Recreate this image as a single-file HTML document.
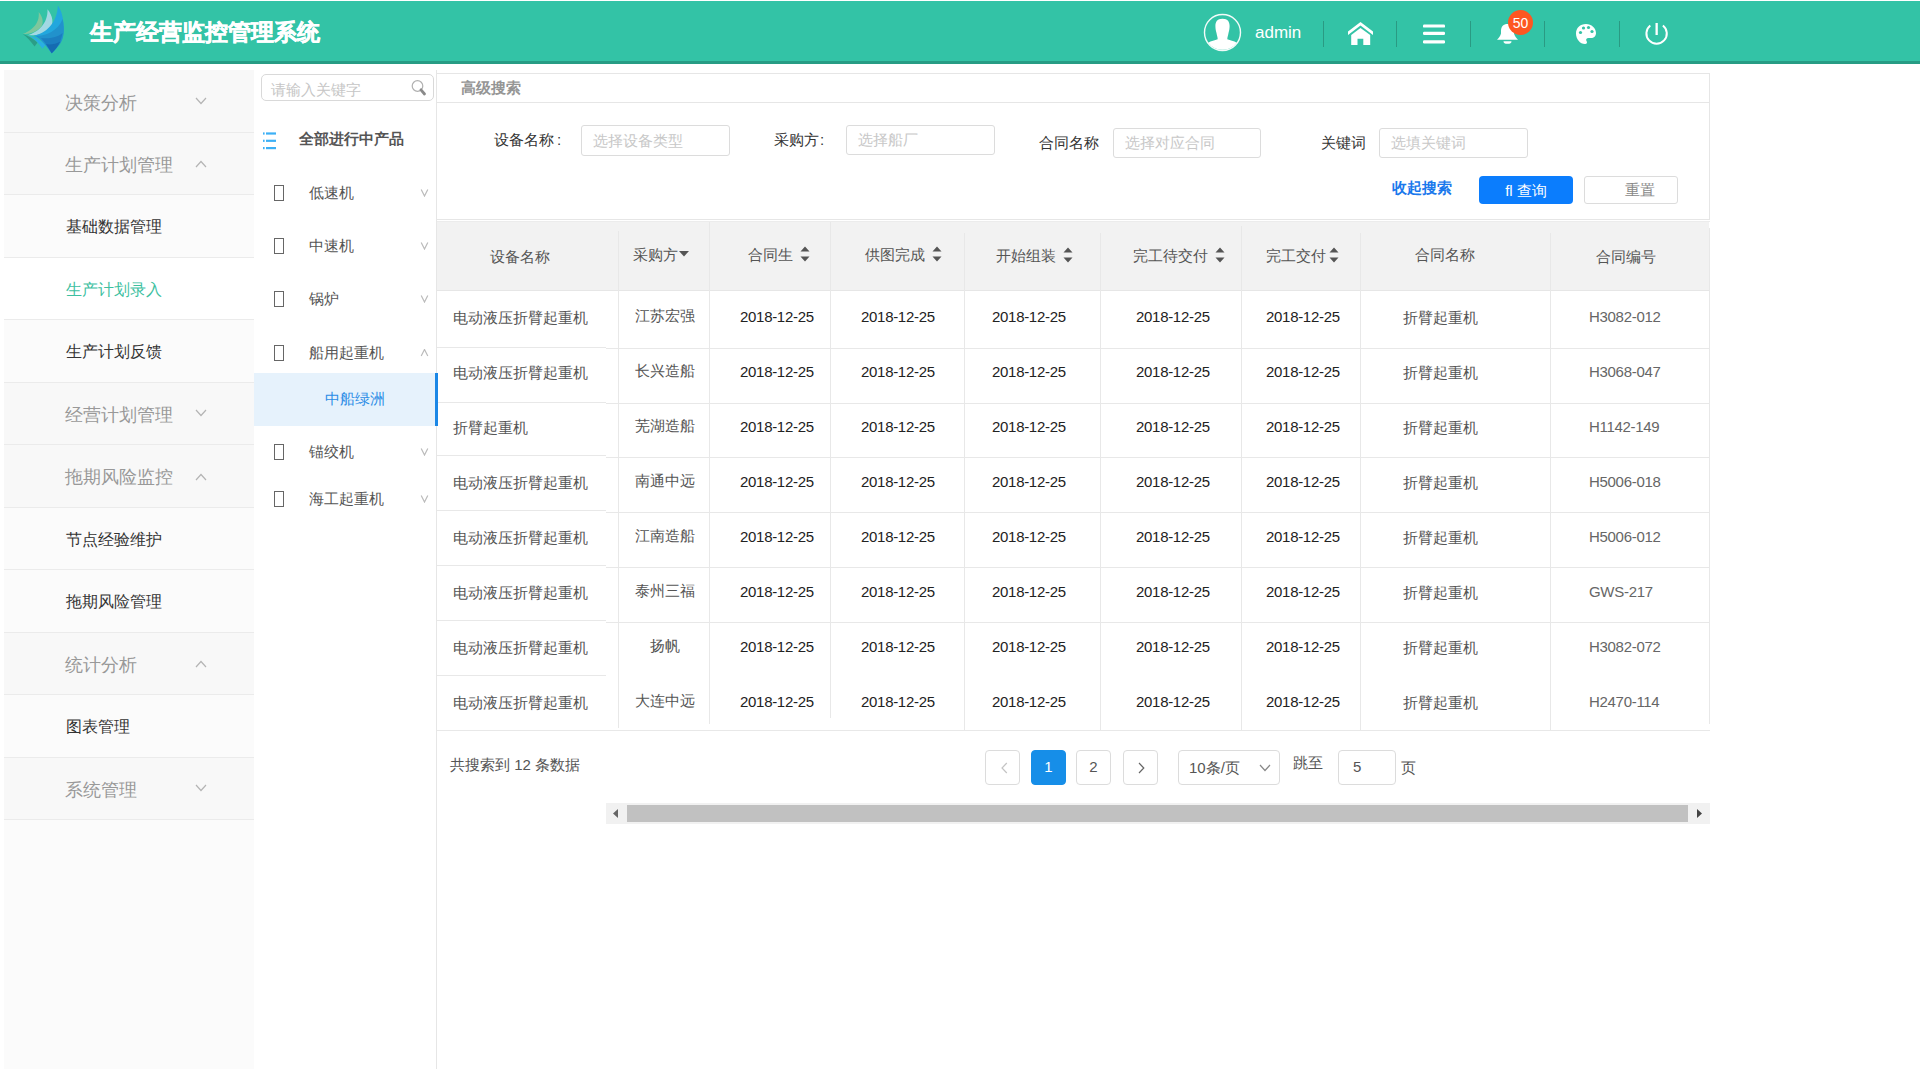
<!DOCTYPE html>
<html><head><meta charset="utf-8">
<style>
*{margin:0;padding:0;box-sizing:border-box}
html,body{width:1920px;height:1080px;overflow:hidden;background:#fff;font-family:"Liberation Sans",sans-serif;color:#333}
.abs{position:absolute}
#hdr{position:absolute;left:0;top:1px;width:1920px;height:60px;background:#33c3a6}
#hdrb{position:absolute;left:0;top:61px;width:1920px;height:3px;background:#279c84}
.title{position:absolute;left:90px;top:16px;font-size:23px;font-weight:bold;color:#fff;-webkit-text-stroke:0.5px #fff;line-height:32px;white-space:nowrap}
.sep{position:absolute;top:21px;width:1px;height:26px;background:#2a9a83}
#side{position:absolute;left:4px;top:70px;width:250px;height:999px;background:#fbfbfb}
.mi{position:absolute;left:4px;width:250px;border-bottom:1px solid #ebebeb;white-space:nowrap}
.mi.p{background:#f8f8f8;color:#999;font-size:18px}
.mi.c{background:#fbfbfb;color:#333;font-size:16px}
.mi.act{background:#fff;color:#3dbf9f}
.mi span{position:absolute;left:62px}
.arr{position:absolute;left:191px;width:12px;height:8px}
.tree{position:absolute;white-space:nowrap;font-size:15px;color:#555}
.tofu{position:absolute;left:274px;width:10px;height:16px;border:1.2px solid #666}
.tarr{position:absolute;left:420px;font-size:12px;color:#aaa}
.lbl{position:absolute;font-size:15px;color:#333;white-space:nowrap}
.inp{position:absolute;border:1px solid #dcdcdc;border-radius:3px;height:31px;font-size:15px;color:#c8c8c8;padding-left:11px;line-height:29px;white-space:nowrap}
.th{position:absolute;font-size:15px;color:#555;white-space:nowrap}
.td{position:absolute;font-size:15px;white-space:nowrap}
.dt{letter-spacing:-0.3px}
.vl{position:absolute;width:1px;background:#e8e8e8}
.hl{position:absolute;height:1px;background:#e8e8e8}
.pg{position:absolute;top:750px;height:35px;border:1px solid #dcdcdc;border-radius:4px;font-size:15px;color:#555;text-align:center;line-height:33px}
</style></head><body>
<div id="hdr"></div><div id="hdrb"></div>
<!-- logo -->
<svg class="abs" style="left:0;top:0" width="80" height="60" viewBox="0 0 80 60">
  <path d="M22.7 34.1 C30 31 40 25 38.7 11.9 C43 17 44 23 41 27 C36 32 30 34 22.7 34.1 Z" fill="#7ec79c"/>
  <path d="M22.7 34.1 C28 36 34 39 37.5 42.5 L34.6 46.6 C31 42 27 37 22.7 34.1 Z" fill="#2b9e87"/>
  <path d="M28 35.2 C38 32 48 24 47.5 9.3 C53 16 54 24 50 29 C45 34 36 36 28 35.2 Z" fill="#a2d8e3"/>
  <path d="M28.4 35.2 C35 37 41 40 45.5 45 L42.4 48.7 C39 43 34 38 28.4 35.2 Z" fill="#2aaee3"/>
  <path d="M33.6 35.7 C45 34 57 24 57.9 5.6 C64 14 65 30 62 40 C59 46 55 50 51.7 53.3 C47 46 41 39 33.6 35.7 Z" fill="#22a7dd"/>
  <path d="M36 36 C46 36 58 31 62.6 19.1 C65 30 64 38 60 44 C57 48 54 51 51.7 53.3 C47 47 42 40 36 36 Z" fill="#2192cc"/>
  <path d="M41 38 C48 39 57 38 62.6 33.1 C61 42 57 48 51.7 53.3 C48 47 45 42 41 38 Z" fill="#1b7ec0"/>
  <path d="M46 44 C50 45 56 44 60.5 41.4 C58 46 55 50 51.7 53.3 C50 50 48 47 46 44 Z" fill="#156bb1"/>
</svg>
<div class="title">生产经营监控管理系统</div>
<!-- header right -->
<svg class="abs" style="left:1203px;top:13px" width="39" height="39" viewBox="0 0 39 39">
  <circle cx="19.5" cy="19.5" r="18" fill="none" stroke="#f2fbf9" stroke-width="1.4"/>
  <path d="M19.5 5.8 C14 5.8 12.4 9 12.4 13 C12.4 16 13 18 13.5 20 C14 23 14.7 24 14.7 26.3 C12 27.5 8 28 5.2 29.8 A18 18 0 0 0 33.8 29.8 C31 28 27 27.5 24.3 26.3 C24.3 24 25 23 25.5 20 C26 18 26.6 16 26.6 13 C26.6 9 25 5.8 19.5 5.8 Z" fill="#fff"/>
</svg>
<div class="abs" style="left:1255px;top:23px;font-size:17px;color:#fff;line-height:20px">admin</div>
<div class="sep" style="left:1323px"></div>
<svg class="abs" style="left:1347px;top:21px" width="27" height="25" viewBox="0 0 27 25">
  <path d="M13.5 1 L26 10.5 L26 14 L13.5 4.6 L1 14 L1 10.5 Z" fill="#fff"/>
  <path d="M4.2 14 L13.5 6.9 L23.2 14 L23.2 24 L16.3 24 L16.3 17.7 L10.5 17.7 L10.5 24 L4.2 24 Z" fill="#fff"/>
</svg>
<div class="sep" style="left:1396px"></div>
<svg class="abs" style="left:1423px;top:23px" width="23" height="22" viewBox="0 0 23 22">
  <rect x="0" y="1.4" width="22" height="3.2" rx="1.2" fill="#fff"/>
  <rect x="0" y="8.8" width="22" height="3.2" rx="1.2" fill="#fff"/>
  <rect x="0" y="17.2" width="22" height="3.2" rx="1.2" fill="#fff"/>
</svg>
<div class="sep" style="left:1470px"></div>
<svg class="abs" style="left:1496px;top:22px" width="24" height="24" viewBox="0 0 24 24">
  <path d="M5 9 C5 4.5 7.5 2 11.5 2 C15.5 2 18 4.5 18 9 L18 11.5 C18.5 14 20.5 16 22 17.8 L1 17.8 C2.5 16 4.5 14 5 11.5 Z" fill="#fff"/>
  <path d="M7.5 19.2 A4 2.6 0 0 0 15.5 19.2 Z" fill="#fff"/>
</svg>
<div class="abs" style="left:1508px;top:10px;width:25px;height:25px;border-radius:50%;background:#fd5721;color:#fff;font-size:14px;text-align:center;line-height:26px">50</div>
<div class="sep" style="left:1544px"></div>
<svg class="abs" style="left:1575px;top:23px" width="22" height="22" viewBox="0 0 22 22">
  <path d="M11 1 C5 1 1 5 1 10.5 C1 16 5 21 10 21 C12 21 12.5 19.5 11.5 18 C10.5 16.5 11.5 15 13.5 15 L16 15 C19 15 21 13 21 10 C21 5 16.5 1 11 1Z" fill="#fff"/>
  <circle cx="5.5" cy="9.5" r="1.6" fill="#33c3a6"/><circle cx="8.5" cy="5" r="1.6" fill="#33c3a6"/>
  <circle cx="13.5" cy="4.5" r="1.6" fill="#33c3a6"/><circle cx="17" cy="8.5" r="1.6" fill="#33c3a6"/>
</svg>
<div class="sep" style="left:1619px"></div>
<svg class="abs" style="left:1643px;top:20px" width="28" height="28" viewBox="0 0 28 28">
  <path d="M7.3 5.5 A10.2 10.2 0 1 0 19.9 5.5" fill="none" stroke="#fff" stroke-width="2"/>
  <rect x="12.5" y="3" width="2.3" height="12" fill="#fff"/>
</svg>

<!-- sidebar -->
<div id="side"></div>
<div class="mi p" style="top:70px;height:63px"><span style="left:61px;top:21px;line-height:24px">决策分析</span><svg class="arr" style="top:27px" width="12" height="8" viewBox="0 0 12 8"><path d="M1 1 L6 6.5 L11 1" fill="none" stroke="#b4b4b4" stroke-width="1.2"/></svg></div>
<div class="mi p" style="top:133px;height:62px"><span style="left:61px;top:20px;line-height:24px">生产计划管理</span><svg class="arr" style="top:27px" width="12" height="8" viewBox="0 0 12 8"><path d="M1 7 L6 1.5 L11 7" fill="none" stroke="#b4b4b4" stroke-width="1.2"/></svg></div>
<div class="mi c" style="top:195px;height:63px"><span style="left:62px;top:20px;line-height:24px">基础数据管理</span></div>
<div class="mi c act" style="top:258px;height:62px"><span style="left:62px;top:20px;line-height:24px">生产计划录入</span></div>
<div class="mi c" style="top:320px;height:63px"><span style="left:62px;top:20px;line-height:24px">生产计划反馈</span></div>
<div class="mi p" style="top:383px;height:62px"><span style="left:61px;top:20px;line-height:24px">经营计划管理</span><svg class="arr" style="top:26px" width="12" height="8" viewBox="0 0 12 8"><path d="M1 1 L6 6.5 L11 1" fill="none" stroke="#b4b4b4" stroke-width="1.2"/></svg></div>
<div class="mi p" style="top:445px;height:63px"><span style="left:61px;top:20px;line-height:24px">拖期风险监控</span><svg class="arr" style="top:28px" width="12" height="8" viewBox="0 0 12 8"><path d="M1 7 L6 1.5 L11 7" fill="none" stroke="#b4b4b4" stroke-width="1.2"/></svg></div>
<div class="mi c" style="top:508px;height:62px"><span style="left:62px;top:20px;line-height:24px">节点经验维护</span></div>
<div class="mi c" style="top:570px;height:63px"><span style="left:62px;top:20px;line-height:24px">拖期风险管理</span></div>
<div class="mi p" style="top:633px;height:62px"><span style="left:61px;top:20px;line-height:24px">统计分析</span><svg class="arr" style="top:27px" width="12" height="8" viewBox="0 0 12 8"><path d="M1 7 L6 1.5 L11 7" fill="none" stroke="#b4b4b4" stroke-width="1.2"/></svg></div>
<div class="mi c" style="top:695px;height:63px"><span style="left:62px;top:20px;line-height:24px">图表管理</span></div>
<div class="mi p" style="top:758px;height:62px"><span style="left:61px;top:20px;line-height:24px">系统管理</span><svg class="arr" style="top:26px" width="12" height="8" viewBox="0 0 12 8"><path d="M1 1 L6 6.5 L11 1" fill="none" stroke="#b4b4b4" stroke-width="1.2"/></svg></div>
<div class="vl" style="left:436px;top:70px;height:999px;background:#e6e6e6"></div>
<div class="abs" style="left:261px;top:74px;width:173px;height:27px;border:1px solid #d9d9d9;border-radius:5px"></div>
<div class="abs" style="left:271px;top:80px;font-size:15px;color:#c6c6c6;line-height:20px;white-space:nowrap">请输入关键字</div>
<svg class="abs" style="left:410px;top:79px" width="17" height="17" viewBox="0 0 17 17">
  <circle cx="7.5" cy="7" r="5.3" fill="none" stroke="#b0b0b0" stroke-width="1.2"/>
  <path d="M11 10.8 L14.5 15" stroke="#8a8a8a" stroke-width="2.8" stroke-linecap="round"/>
</svg>
<svg class="abs" style="left:262px;top:131px" width="15" height="19" viewBox="0 0 15 19">
  <rect x="1" y="1.4" width="1.6" height="2.2" fill="#3cb0f6"/><rect x="4" y="1.4" width="10" height="2.2" fill="#3cb0f6"/>
  <rect x="1" y="8.7" width="1.6" height="2.2" fill="#3cb0f6"/><rect x="4" y="8.7" width="10" height="2.2" fill="#3cb0f6"/>
  <rect x="1" y="16" width="1.6" height="2.2" fill="#3cb0f6"/><rect x="4" y="16" width="10" height="2.2" fill="#3cb0f6"/>
</svg>
<div class="tree" style="left:299px;top:129px;line-height:20px;font-weight:bold;color:#555">全部进行中产品</div>
<div class="tofu" style="top:185px"></div><div class="tree" style="left:309px;top:183px;line-height:20px">低速机</div><svg class="abs" style="left:420px;top:189px" width="9" height="8" viewBox="0 0 9 8"><path d="M1.2 0.5 L4.5 7 L7.8 0.5" fill="none" stroke="#bbb" stroke-width="1.2"/></svg>
<div class="tofu" style="top:238px"></div><div class="tree" style="left:309px;top:236px;line-height:20px">中速机</div><svg class="abs" style="left:420px;top:242px" width="9" height="8" viewBox="0 0 9 8"><path d="M1.2 0.5 L4.5 7 L7.8 0.5" fill="none" stroke="#bbb" stroke-width="1.2"/></svg>
<div class="tofu" style="top:291px"></div><div class="tree" style="left:309px;top:289px;line-height:20px">锅炉</div><svg class="abs" style="left:420px;top:295px" width="9" height="8" viewBox="0 0 9 8"><path d="M1.2 0.5 L4.5 7 L7.8 0.5" fill="none" stroke="#bbb" stroke-width="1.2"/></svg>
<div class="tofu" style="top:345px"></div><div class="tree" style="left:309px;top:343px;line-height:20px">船用起重机</div><svg class="abs" style="left:420px;top:349px" width="9" height="8" viewBox="0 0 9 8"><path d="M1.2 7 L4.5 0.5 L7.8 7" fill="none" stroke="#bbb" stroke-width="1.2"/></svg>
<div class="tofu" style="top:444px"></div><div class="tree" style="left:309px;top:442px;line-height:20px">锚绞机</div><svg class="abs" style="left:420px;top:448px" width="9" height="8" viewBox="0 0 9 8"><path d="M1.2 0.5 L4.5 7 L7.8 0.5" fill="none" stroke="#bbb" stroke-width="1.2"/></svg>
<div class="tofu" style="top:491px"></div><div class="tree" style="left:309px;top:489px;line-height:20px">海工起重机</div><svg class="abs" style="left:420px;top:495px" width="9" height="8" viewBox="0 0 9 8"><path d="M1.2 0.5 L4.5 7 L7.8 0.5" fill="none" stroke="#bbb" stroke-width="1.2"/></svg>
<div class="abs" style="left:254px;top:373px;width:184px;height:53px;background:#e6f2fc;border-right:3px solid #1b87e6;z-index:2"></div>
<div class="tree" style="left:325px;top:389px;line-height:20px;color:#2b8de6;z-index:3">中船绿洲</div>

<div class="abs" style="left:437px;top:73px;width:1273px;height:147px;border:1px solid #e6e6e6;border-left:none"></div>
<div class="hl" style="left:437px;top:102px;width:1272px;background:#e6e6e6"></div>
<div class="abs" style="left:461px;top:78px;font-size:15px;color:#959595;font-weight:bold;line-height:20px;white-space:nowrap">高级搜索</div>
<div class="lbl" style="left:494px;top:130px;line-height:20px">设备名称<span style="margin-left:3px">:</span></div>
<div class="inp" style="left:581px;top:125px;width:149px">选择设备类型</div>
<div class="lbl" style="left:774px;top:130px;line-height:20px">采购方<span style="margin-left:1px">:</span></div>
<div class="inp" style="left:846px;top:125px;width:149px;height:30px;line-height:28px">选择船厂</div>
<div class="lbl" style="left:1039px;top:133px;line-height:20px">合同名称</div>
<div class="inp" style="left:1113px;top:128px;width:148px;height:30px;line-height:28px">选择对应合同</div>
<div class="lbl" style="left:1321px;top:133px;line-height:20px">关键词</div>
<div class="inp" style="left:1379px;top:128px;width:149px;height:30px;line-height:28px">选填关键词</div>
<div class="abs" style="left:1392px;top:178px;font-size:15px;color:#1a78ec;font-weight:bold;line-height:20px;white-space:nowrap">收起搜索</div>
<div class="abs" style="left:1479px;top:176px;width:94px;height:28px;background:#0b7dfd;border-radius:4px;color:#fff;font-size:15px;line-height:29px;text-align:center;white-space:nowrap">fl 查询</div>
<div class="abs" style="left:1584px;top:176px;width:94px;height:28px;border:1px solid #dcdcdc;border-radius:3px;color:#888;font-size:15px;line-height:26px;padding-left:40px">重置</div>

<div class="hl" style="left:437px;top:221px;width:1273px;background:#ececec"></div>
<div class="abs" style="left:437px;top:222px;width:1272px;height:68px;background:#f2f2f2"></div>
<div class="hl" style="left:437px;top:290px;width:1272px;background:#e6e6e6"></div>
<div class="vl" style="left:618px;top:231px;height:497px"></div>
<div class="vl" style="left:709px;top:222px;height:502px"></div>
<div class="vl" style="left:830px;top:222px;height:496px"></div>
<div class="vl" style="left:964px;top:233px;height:497px"></div>
<div class="vl" style="left:1100px;top:233px;height:497px"></div>
<div class="vl" style="left:1241px;top:226px;height:504px"></div>
<div class="vl" style="left:1360px;top:233px;height:497px"></div>
<div class="vl" style="left:1550px;top:233px;height:497px"></div>
<div class="vl" style="left:1709px;top:228px;height:496px"></div>
<div class="th" style="left:490px;top:247px;line-height:20px">设备名称</div>
<div class="th" style="left:633px;top:245px;line-height:20px">采购方</div><svg class="abs" style="left:679px;top:251px" width="10" height="6" viewBox="0 0 10 6"><path d="M0 0 L10 0 L5 5.5Z" fill="#555"/></svg>
<div class="th" style="left:748px;top:245px;line-height:20px">合同生</div><svg class="abs" style="left:800px;top:246px" width="10" height="16" viewBox="0 0 10 16"><path d="M0.5 5.5 L5 0.5 L9.5 5.5Z M0.5 10.5 L5 15.5 L9.5 10.5Z" fill="#555"/></svg>
<div class="th" style="left:865px;top:245px;line-height:20px">供图完成</div><svg class="abs" style="left:932px;top:246px" width="10" height="16" viewBox="0 0 10 16"><path d="M0.5 5.5 L5 0.5 L9.5 5.5Z M0.5 10.5 L5 15.5 L9.5 10.5Z" fill="#555"/></svg>
<div class="th" style="left:996px;top:246px;line-height:20px">开始组装</div><svg class="abs" style="left:1063px;top:247px" width="10" height="16" viewBox="0 0 10 16"><path d="M0.5 5.5 L5 0.5 L9.5 5.5Z M0.5 10.5 L5 15.5 L9.5 10.5Z" fill="#555"/></svg>
<div class="th" style="left:1133px;top:246px;line-height:20px">完工待交付</div><svg class="abs" style="left:1215px;top:247px" width="10" height="16" viewBox="0 0 10 16"><path d="M0.5 5.5 L5 0.5 L9.5 5.5Z M0.5 10.5 L5 15.5 L9.5 10.5Z" fill="#555"/></svg>
<div class="th" style="left:1266px;top:246px;line-height:20px">完工交付</div><svg class="abs" style="left:1329px;top:247px" width="10" height="16" viewBox="0 0 10 16"><path d="M0.5 5.5 L5 0.5 L9.5 5.5Z M0.5 10.5 L5 15.5 L9.5 10.5Z" fill="#555"/></svg>
<div class="th" style="left:1415px;top:245px;line-height:20px">合同名称</div>
<div class="th" style="left:1596px;top:247px;line-height:20px">合同编号</div>
<div class="td" style="left:453px;top:308px;line-height:20px;color:#555">电动液压折臂起重机</div><div class="td" style="left:619px;width:91px;text-align:center;top:306px;line-height:20px;color:#555">江苏宏强</div><div class="td dt" style="left:740px;top:307px;line-height:20px;color:#222">2018-12-25</div><div class="td dt" style="left:861px;top:307px;line-height:20px;color:#222">2018-12-25</div><div class="td dt" style="left:992px;top:307px;line-height:20px;color:#222">2018-12-25</div><div class="td dt" style="left:1136px;top:307px;line-height:20px;color:#222">2018-12-25</div><div class="td dt" style="left:1266px;top:307px;line-height:20px;color:#222">2018-12-25</div><div class="td" style="left:1403px;top:308px;line-height:20px;color:#555">折臂起重机</div><div class="td dt" style="left:1589px;top:307px;line-height:20px;color:#666">H3082-012</div>
<div class="td" style="left:453px;top:363px;line-height:20px;color:#555">电动液压折臂起重机</div><div class="td" style="left:619px;width:91px;text-align:center;top:361px;line-height:20px;color:#555">长兴造船</div><div class="td dt" style="left:740px;top:362px;line-height:20px;color:#222">2018-12-25</div><div class="td dt" style="left:861px;top:362px;line-height:20px;color:#222">2018-12-25</div><div class="td dt" style="left:992px;top:362px;line-height:20px;color:#222">2018-12-25</div><div class="td dt" style="left:1136px;top:362px;line-height:20px;color:#222">2018-12-25</div><div class="td dt" style="left:1266px;top:362px;line-height:20px;color:#222">2018-12-25</div><div class="td" style="left:1403px;top:363px;line-height:20px;color:#555">折臂起重机</div><div class="td dt" style="left:1589px;top:362px;line-height:20px;color:#666">H3068-047</div>
<div class="td" style="left:453px;top:418px;line-height:20px;color:#555">折臂起重机</div><div class="td" style="left:619px;width:91px;text-align:center;top:416px;line-height:20px;color:#555">芜湖造船</div><div class="td dt" style="left:740px;top:417px;line-height:20px;color:#222">2018-12-25</div><div class="td dt" style="left:861px;top:417px;line-height:20px;color:#222">2018-12-25</div><div class="td dt" style="left:992px;top:417px;line-height:20px;color:#222">2018-12-25</div><div class="td dt" style="left:1136px;top:417px;line-height:20px;color:#222">2018-12-25</div><div class="td dt" style="left:1266px;top:417px;line-height:20px;color:#222">2018-12-25</div><div class="td" style="left:1403px;top:418px;line-height:20px;color:#555">折臂起重机</div><div class="td dt" style="left:1589px;top:417px;line-height:20px;color:#666">H1142-149</div>
<div class="td" style="left:453px;top:473px;line-height:20px;color:#555">电动液压折臂起重机</div><div class="td" style="left:619px;width:91px;text-align:center;top:471px;line-height:20px;color:#555">南通中远</div><div class="td dt" style="left:740px;top:472px;line-height:20px;color:#222">2018-12-25</div><div class="td dt" style="left:861px;top:472px;line-height:20px;color:#222">2018-12-25</div><div class="td dt" style="left:992px;top:472px;line-height:20px;color:#222">2018-12-25</div><div class="td dt" style="left:1136px;top:472px;line-height:20px;color:#222">2018-12-25</div><div class="td dt" style="left:1266px;top:472px;line-height:20px;color:#222">2018-12-25</div><div class="td" style="left:1403px;top:473px;line-height:20px;color:#555">折臂起重机</div><div class="td dt" style="left:1589px;top:472px;line-height:20px;color:#666">H5006-018</div>
<div class="td" style="left:453px;top:528px;line-height:20px;color:#555">电动液压折臂起重机</div><div class="td" style="left:619px;width:91px;text-align:center;top:526px;line-height:20px;color:#555">江南造船</div><div class="td dt" style="left:740px;top:527px;line-height:20px;color:#222">2018-12-25</div><div class="td dt" style="left:861px;top:527px;line-height:20px;color:#222">2018-12-25</div><div class="td dt" style="left:992px;top:527px;line-height:20px;color:#222">2018-12-25</div><div class="td dt" style="left:1136px;top:527px;line-height:20px;color:#222">2018-12-25</div><div class="td dt" style="left:1266px;top:527px;line-height:20px;color:#222">2018-12-25</div><div class="td" style="left:1403px;top:528px;line-height:20px;color:#555">折臂起重机</div><div class="td dt" style="left:1589px;top:527px;line-height:20px;color:#666">H5006-012</div>
<div class="td" style="left:453px;top:583px;line-height:20px;color:#555">电动液压折臂起重机</div><div class="td" style="left:619px;width:91px;text-align:center;top:581px;line-height:20px;color:#555">泰州三福</div><div class="td dt" style="left:740px;top:582px;line-height:20px;color:#222">2018-12-25</div><div class="td dt" style="left:861px;top:582px;line-height:20px;color:#222">2018-12-25</div><div class="td dt" style="left:992px;top:582px;line-height:20px;color:#222">2018-12-25</div><div class="td dt" style="left:1136px;top:582px;line-height:20px;color:#222">2018-12-25</div><div class="td dt" style="left:1266px;top:582px;line-height:20px;color:#222">2018-12-25</div><div class="td" style="left:1403px;top:583px;line-height:20px;color:#555">折臂起重机</div><div class="td dt" style="left:1589px;top:582px;line-height:20px;color:#666">GWS-217</div>
<div class="td" style="left:453px;top:638px;line-height:20px;color:#555">电动液压折臂起重机</div><div class="td" style="left:619px;width:91px;text-align:center;top:636px;line-height:20px;color:#555">扬帆</div><div class="td dt" style="left:740px;top:637px;line-height:20px;color:#222">2018-12-25</div><div class="td dt" style="left:861px;top:637px;line-height:20px;color:#222">2018-12-25</div><div class="td dt" style="left:992px;top:637px;line-height:20px;color:#222">2018-12-25</div><div class="td dt" style="left:1136px;top:637px;line-height:20px;color:#222">2018-12-25</div><div class="td dt" style="left:1266px;top:637px;line-height:20px;color:#222">2018-12-25</div><div class="td" style="left:1403px;top:638px;line-height:20px;color:#555">折臂起重机</div><div class="td dt" style="left:1589px;top:637px;line-height:20px;color:#666">H3082-072</div>
<div class="td" style="left:453px;top:693px;line-height:20px;color:#555">电动液压折臂起重机</div><div class="td" style="left:619px;width:91px;text-align:center;top:691px;line-height:20px;color:#555">大连中远</div><div class="td dt" style="left:740px;top:692px;line-height:20px;color:#222">2018-12-25</div><div class="td dt" style="left:861px;top:692px;line-height:20px;color:#222">2018-12-25</div><div class="td dt" style="left:992px;top:692px;line-height:20px;color:#222">2018-12-25</div><div class="td dt" style="left:1136px;top:692px;line-height:20px;color:#222">2018-12-25</div><div class="td dt" style="left:1266px;top:692px;line-height:20px;color:#222">2018-12-25</div><div class="td" style="left:1403px;top:693px;line-height:20px;color:#555">折臂起重机</div><div class="td dt" style="left:1589px;top:692px;line-height:20px;color:#666">H2470-114</div>
<div class="hl" style="left:606px;top:348px;width:1103px"></div>
<div class="hl" style="left:606px;top:403px;width:1103px"></div>
<div class="hl" style="left:606px;top:457px;width:1103px"></div>
<div class="hl" style="left:606px;top:512px;width:1103px"></div>
<div class="hl" style="left:606px;top:567px;width:1103px"></div>
<div class="hl" style="left:606px;top:622px;width:1103px"></div>
<div class="hl" style="left:437px;top:730px;width:1273px"></div>
<div class="hl" style="left:437px;top:347px;width:169px"></div>
<div class="hl" style="left:437px;top:402px;width:169px"></div>
<div class="hl" style="left:437px;top:455px;width:169px"></div>
<div class="hl" style="left:437px;top:510px;width:169px"></div>
<div class="hl" style="left:437px;top:565px;width:169px"></div>
<div class="hl" style="left:437px;top:620px;width:169px"></div>
<div class="hl" style="left:437px;top:675px;width:169px"></div>

<div class="td" style="left:450px;top:755px;line-height:20px;color:#555">共搜索到 12 条数据</div>
<div class="pg" style="left:985px;width:35px"><svg width="10" height="14" viewBox="0 0 10 14" style="margin-top:10px;margin-left:2px"><path d="M7.8 2 L3 7 L7.8 12" fill="none" stroke="#c4c4c4" stroke-width="1.2"/></svg></div>
<div class="pg" style="left:1031px;width:35px;background:#168ee8;border-color:#168ee8;color:#fff;line-height:32px">1</div>
<div class="pg" style="left:1076px;width:35px;line-height:32px">2</div>
<div class="pg" style="left:1123px;width:35px"><svg width="10" height="14" viewBox="0 0 10 14" style="margin-top:10px"><path d="M3 2 L7.8 7 L3 12" fill="none" stroke="#666" stroke-width="1.2"/></svg></div>
<div class="pg" style="left:1178px;width:102px;text-align:left;padding-left:10px;color:#555">10条/页<svg class="abs" style="left:80px;top:13px" width="12" height="8" viewBox="0 0 12 8"><path d="M1 1 L6 6.5 L11 1" fill="none" stroke="#888" stroke-width="1.2"/></svg></div>
<div class="td" style="left:1293px;top:753px;line-height:20px;color:#555">跳至</div>
<div class="pg" style="left:1338px;width:58px;text-align:left;padding-left:14px;line-height:32px">5</div>
<div class="td" style="left:1401px;top:758px;line-height:20px;color:#555">页</div>
<div class="abs" style="left:606px;top:803px;width:1104px;height:21px;background:#f1f1f1"></div>
<div class="abs" style="left:627px;top:805px;width:1061px;height:17px;background:#c1c1c1"></div>
<svg class="abs" style="left:612px;top:809px" width="8" height="9" viewBox="0 0 8 9"><path d="M6 0 L1 4.5 L6 9Z" fill="#666"/></svg>
<svg class="abs" style="left:1695px;top:809px" width="8" height="9" viewBox="0 0 8 9"><path d="M2 0 L7 4.5 L2 9Z" fill="#444"/></svg>
</body></html>
